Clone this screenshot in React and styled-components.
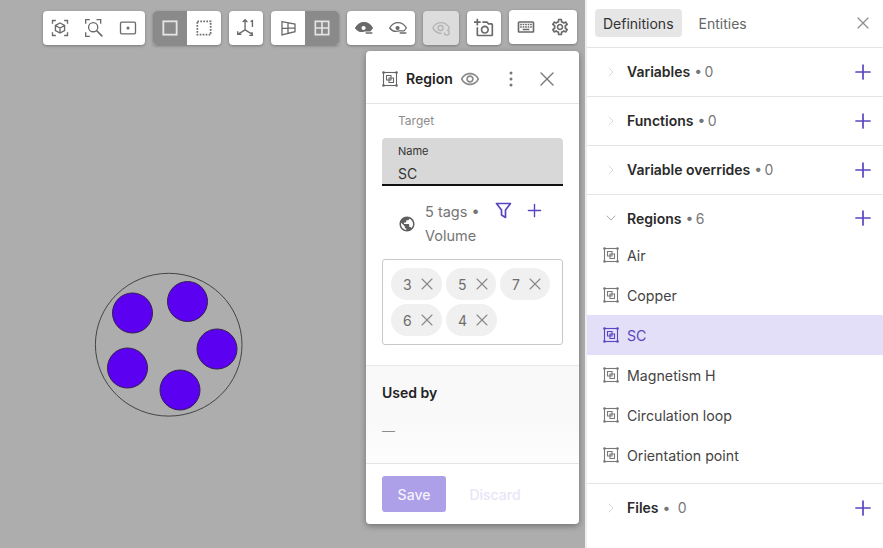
import styled, { createGlobalStyle } from "styled-components";
import { Plus, X, ChevronRight, ChevronDown } from "lucide-react";
import { MdPublic, MdOutlineAddAPhoto, MdOutlineKeyboard, MdOutlineSettings, MdOutlineRemoveRedEye } from "react-icons/md";

const GlobalStyle = createGlobalStyle`
  html, body {
    margin: 0;
    padding: 0;
    height: 100%;
    overflow: hidden;
    font-family: Inter, "Liberation Sans", sans-serif;
  }
  #root { height: 100%; }
  * { box-sizing: border-box; }
`;

const Page = styled.div`
  display: flex;
  width: 883px;
  height: 548px;
  background: #fff;
`;

const Canvas = styled.main`
  position: relative;
  width: 585px;
  height: 548px;
  flex: none;
  background: #adadad;
  padding: 11px 6px 0 0;
  display: flex;
  flex-direction: column;
  align-items: flex-end;
`;

const Scene = styled.svg`
  position: absolute;
  left: 80px;
  top: 260px;
`;

const Toolbar = styled.div`
  display: flex;
  gap: 8px;
  align-items: flex-start;
  margin-right: 2px;
`;

const Group = styled.div`
  display: flex;
  height: 34px;
  border-radius: 4px;
  overflow: hidden;
  background: ${({ $disabled }) => ($disabled ? "#dcdcdc" : "#fff")};
  box-shadow: 0 1px 3px rgba(0, 0, 0, 0.3);
  margin-top: ${({ $raised }) => ($raised ? "-1px" : "0")};
`;

const ToolButton = styled.button`
  width: ${({ $wide }) => ($wide ? "36px" : "34px")};
  height: 34px;
  padding: 0;
  border: none;
  display: flex;
  align-items: center;
  justify-content: center;
  color: ${({ $active, $muted }) => ($active ? "#e4e4e4" : $muted ? "#b4b4b4" : "#6a6a6a")};
  background: ${({ $active }) => ($active ? "#8a8a8a" : "transparent")};
`;

const Panel = styled.section`
  width: 213px;
  height: 473px;
  margin-top: 6px;
  background: #fff;
  border-radius: 4px;
  box-shadow: 0 2px 6px rgba(0, 0, 0, 0.35);
  display: flex;
  flex-direction: column;
  overflow: hidden;
`;

const PanelHeader = styled.header`
  height: 53px;
  flex: none;
  display: flex;
  align-items: center;
  padding: 3px 0 0 16px;
  border-bottom: 1px solid #e4e4e4;
  color: #666;
`;

const PanelTitle = styled.h2`
  margin: 0 0 0 8px;
  font-size: 14px;
  font-weight: 600;
  color: #222;
`;

const HeaderEye = styled.span`
  display: flex;
  margin-left: 7px;
  color: #8a8a8a;
`;

const HeaderDots = styled.span`
  display: flex;
  margin-left: 21px;
  color: #777;
`;

const HeaderClose = styled.span`
  display: flex;
  margin-left: 14px;
  color: #777;
`;

const PanelBody = styled.div`
  flex: none;
  height: 261px;
  padding: 0 16px;
`;

const TargetLabel = styled.div`
  height: 34px;
  padding: 9px 0 0 16px;
  font-size: 12px;
  line-height: 15px;
  color: #8c8c8c;
`;

const NameField = styled.div`
  height: 48px;
  background: #d8d8d8;
  border-radius: 4px 4px 0 0;
  border-bottom: 2px solid #111;
  padding: 6px 16px 0;
`;

const NameLabel = styled.div`
  font-size: 11px;
  line-height: 14px;
  color: #333;
`;

const NameValue = styled.div`
  margin-top: 7px;
  font-size: 14px;
  line-height: 18px;
  color: #333;
`;

const TagsInfo = styled.div`
  height: 73px;
  display: flex;
  padding-left: 16px;
  color: #5f5f5f;
`;

const GlobeWrap = styled.span`
  display: flex;
  margin: 29px 9px 0 0;
`;

const TagsText = styled.div`
  width: 66px;
  padding-top: 14px;
  font-size: 14.5px;
  line-height: 24px;
  color: #757575;
`;

const TagsActions = styled.div`
  display: flex;
  align-items: center;
  align-self: flex-start;
  gap: 12px;
  margin: 14px 0 0 4px;
  color: #5a45c0;
`;

const TagBox = styled.div`
  height: 86px;
  border: 1px solid #c8c8c8;
  border-radius: 3px;
  padding: 8px;
  display: flex;
  flex-wrap: wrap;
  align-content: flex-start;
  gap: 4px;
`;

const Chip = styled.span`
  width: ${({ $narrow }) => ($narrow ? "50px" : "51px")};
  height: 32px;
  border-radius: 16px;
  background: #f0f0f0;
  display: flex;
  align-items: center;
  gap: 5px;
  padding-left: 12px;
  font-size: 14px;
  color: #6e6e6e;
  svg { color: #888; flex: none; }
`;

const UsedBy = styled.div`
  flex: none;
  height: 98px;
  border-top: 1px solid #e8e8e8;
  background: linear-gradient(#f9f9f9 60%, #fdfdfd);
  padding: 18px 16px 0;
`;

const UsedTitle = styled.h3`
  margin: 0;
  font-size: 14px;
  line-height: 18px;
  font-weight: 600;
  color: #222;
`;

const UsedEmpty = styled.div`
  margin-top: 20px;
  font-size: 13px;
  line-height: 18px;
  color: #8c8c8c;
`;

const PanelFooter = styled.footer`
  flex: 1;
  border-top: 1px solid #e4e4e4;
  display: flex;
  align-items: flex-start;
  padding: 12px 16px 0;
`;

const SaveButton = styled.button`
  width: 64px;
  height: 36px;
  border: none;
  border-radius: 3px;
  background: #ad9fe8;
  color: #f4f2fd;
  font: 500 14px Inter, sans-serif;
`;

const DiscardButton = styled.button`
  margin-left: 16px;
  width: 66px;
  height: 36px;
  border: none;
  background: none;
  color: #e8e5f8;
  font: 500 14px Inter, sans-serif;
`;

const Sidebar = styled.aside`
  width: 298px;
  flex: none;
  border-left: 2px solid #eeeeee;
  background: #fff;
`;

const TabBar = styled.nav`
  height: 48px;
  display: flex;
  align-items: flex-start;
  padding: 9px 10px 0 8px;
  border-bottom: 1px solid #e4e4e4;
`;

const Tab = styled.button`
  height: 28px;
  border: none;
  border-radius: 4px;
  padding: 0 8px;
  margin-right: 9px;
  background: ${({ $active }) => ($active ? "#e6e6e6" : "transparent")};
  color: ${({ $active }) => ($active ? "#333" : "#666")};
  font: 400 14px Inter, sans-serif;
`;

const TabClose = styled.span`
  display: flex;
  margin: 4px 0 0 auto;
  color: #8f8f8f;
`;

const Section = styled.div`
  border-bottom: ${({ $last }) => ($last ? "none" : "1px solid #e4e4e4")};
`;

const SectionHead = styled.div`
  height: ${({ $open }) => ($open ? "40px" : "48px")};
  display: flex;
  align-items: center;
  padding: ${({ $open }) => ($open ? "6px 8px 0 16px" : "0 8px 1px 16px")};
  font-size: 14px;
  svg.chev { color: ${({ $open }) => ($open ? "#aaa" : "#d8d8d8")}; }
`;

const SectionName = styled.span`
  margin-left: 8px;
  font-weight: 600;
  color: #2a2a2a;
`;

const SectionCount = styled.span`
  margin-left: 4px;
  color: #777;
  white-space: pre;
  word-spacing: -1.5px;
`;

const AddIcon = styled.span`
  display: flex;
  margin-left: auto;
  color: #5a45c0;
`;

const List = styled.ul`
  list-style: none;
  margin: 0;
  padding: 0 0 8px;
`;

const Item = styled.li`
  height: 40px;
  display: flex;
  align-items: center;
  gap: 8px;
  padding-left: 16px;
  font-size: 14.2px;
  color: ${({ $selected }) => ($selected ? "#5a45c0" : "#444")};
  background: ${({ $selected }) => ($selected ? "#e3dff8" : "transparent")};
  svg { color: ${({ $selected }) => ($selected ? "#5a45c0" : "#777")}; }
`;

const Svg = ({ size = 20, children }) => (
  <svg width={size} height={size} viewBox="0 0 24 24" fill="none" stroke="currentColor" strokeWidth="1.6">
    {children}
  </svg>
);

const RegionIcon = ({ size = 16 }) => (
  <svg width={size} height={size} viewBox="0 0 16 16" fill="none" stroke="currentColor" strokeWidth="1.1">
    <rect x="1.5" y="1.5" width="13" height="13" />
    <path d="M4.5 4.5h4.5v4.5h-4.5z M7 7h4.5v4.5h-4.5z" />
    <g fill="currentColor" stroke="none">
      <circle cx="1.5" cy="1.5" r="1.3" />
      <circle cx="14.5" cy="1.5" r="1.3" />
      <circle cx="1.5" cy="14.5" r="1.3" />
      <circle cx="14.5" cy="14.5" r="1.3" />
    </g>
  </svg>
);

const Corners = () => <path d="M3 7V3h4M17 3h4v4M21 17v4h-4M7 21H3v-4" />;

const CubeFocus = () => (
  <Svg>
    <Corners />
    <path d="M12 6l5.5 3v6L12 18l-5.5-3V9zM6.5 9l5.5 3 5.5-3M12 12v6" />
  </Svg>
);

const ZoomFocus = () => (
  <Svg>
    <path d="M2 7V2h5M15 2h5v5M2 17v5h5" />
    <circle cx="11" cy="11" r="5.5" />
    <path d="M15 15l7 7" strokeWidth="2" />
  </Svg>
);

const FrameDot = () => (
  <Svg>
    <rect x="3" y="5" width="18" height="14" rx="1.5" />
    <circle cx="12" cy="12" r="1" fill="currentColor" />
  </Svg>
);

const SolidSquare = () => (
  <Svg>
    <rect x="4" y="4" width="16" height="16" strokeWidth="2.2" />
  </Svg>
);

const DottedSquare = () => (
  <Svg>
    <rect x="4" y="4" width="16" height="16" strokeWidth="2" strokeDasharray="2 1.6" />
  </Svg>
);

const Axes = () => (
  <svg width="22" height="22" viewBox="0 0 24 24" fill="none" stroke="currentColor" strokeWidth="1.5">
    <path d="M11 3v11M11 14l-8 5M11 14l8 5M8.5 5.5L11 3l2.5 2.5M3 15.5V19h4M15.5 20H19l-.5-3.5" />
    <path d="M17 5l2-1v7" />
  </svg>
);

const Perspective = () => (
  <Svg>
    <path d="M4.8 4.3L20.4 7.2V16.4L4.8 20.4ZM12 5.6V18.6M4.8 12.5L20.4 11.8" />
  </Svg>
);

const GridView = () => (
  <Svg>
    <path d="M4 4h16v16H4zM12 4v16M4 12h16" strokeWidth="2" />
  </Svg>
);

const EyeMinus = ({ solid }) => (
  <Svg>
    <path
      d="M2 12c2.500-4.500 6-6.500 10-6.500s7.500 2 10 6.500c-1 1.500-2 2.700-3 3.500H13c-5 1.500-8 .5-11-3.500z"
      fill={solid ? "currentColor" : "none"}
    />
    <circle cx="11.500" cy="12" r="2.500" fill={solid ? "#fff" : "currentColor"} stroke="none" />
    <path d="M14 18h8" strokeWidth="2" />
  </Svg>
);

const EyeRefresh = () => (
  <Svg>
    <path d="M2 12c2.500-4.500 6-6.500 10-6.500s7.500 2 10 6.500c-.5.800-1 1.500-1.500 2M13 18.400c-5 .5-8-2-11-6.400" />
    <circle cx="11.500" cy="12" r="3" />
    <path d="M16 17.500a3 3 0 1 0 3-3" />
  </Svg>
);

const DotsVertical = () => (
  <svg width="20" height="20" viewBox="0 0 20 20" fill="currentColor">
    <circle cx="10" cy="4" r="1.500" />
    <circle cx="10" cy="10" r="1.500" />
    <circle cx="10" cy="16" r="1.500" />
  </svg>
);

const Funnel = () => (
  <svg width="17" height="17" viewBox="0 0 17 17" fill="none" stroke="currentColor" strokeWidth="1.7" strokeLinejoin="round">
    <path d="M1.500 1.500h14l-5 6.500v7.500l-4-2.500V8z" />
  </svg>
);

const sections = [
  { name: "Variables", count: "0" },
  { name: "Functions", count: "0" },
  { name: "Variable overrides", count: "0" },
];

const regions = ["Air", "Copper", "SC", "Magnetism H", "Circulation loop", "Orientation point"];

const tags = ["3", "5", "7", "6", "4"];

const discs = [
  [52.5, 53],
  [107.5, 41.5],
  [137, 89],
  [47.5, 108],
  [100, 130],
];

export default function App() {
  return (
    <Page>
      <GlobalStyle />
      <Canvas>
        <Scene width="180" height="170" viewBox="0 0 180 170">
          <ellipse cx="88.7" cy="84.7" rx="73.3" ry="71.4" fill="none" stroke="#444" strokeWidth="1" />
          {discs.map(([cx, cy]) => (
            <circle key={cx} cx={cx} cy={cy} r="20" fill="#5b00f0" stroke="#33224f" strokeWidth="1" />
          ))}
        </Scene>
        <Toolbar>
          <Group>
            <ToolButton><CubeFocus /></ToolButton>
            <ToolButton><ZoomFocus /></ToolButton>
            <ToolButton><FrameDot /></ToolButton>
          </Group>
          <Group>
            <ToolButton $active><SolidSquare /></ToolButton>
            <ToolButton><DottedSquare /></ToolButton>
          </Group>
          <Group>
            <ToolButton><Axes /></ToolButton>
          </Group>
          <Group>
            <ToolButton><Perspective /></ToolButton>
            <ToolButton $active><GridView /></ToolButton>
          </Group>
          <Group>
            <ToolButton><EyeMinus solid /></ToolButton>
            <ToolButton><EyeMinus /></ToolButton>
          </Group>
          <Group $disabled>
            <ToolButton $wide $muted><EyeRefresh /></ToolButton>
          </Group>
          <Group>
            <ToolButton><MdOutlineAddAPhoto size={20} /></ToolButton>
          </Group>
          <Group $raised>
            <ToolButton><MdOutlineKeyboard size={20} /></ToolButton>
            <ToolButton><MdOutlineSettings size={20} /></ToolButton>
          </Group>
        </Toolbar>
        <Panel>
          <PanelHeader>
            <RegionIcon />
            <PanelTitle>Region</PanelTitle>
            <HeaderEye><MdOutlineRemoveRedEye size={20} /></HeaderEye>
            <HeaderDots><DotsVertical /></HeaderDots>
            <HeaderClose><X size={24} strokeWidth={1.4} /></HeaderClose>
          </PanelHeader>
          <PanelBody>
            <TargetLabel>Target</TargetLabel>
            <NameField>
              <NameLabel>Name</NameLabel>
              <NameValue>SC</NameValue>
            </NameField>
            <TagsInfo>
              <GlobeWrap><MdPublic size={18} /></GlobeWrap>
              <TagsText>5 tags • Volume</TagsText>
              <TagsActions>
                <Funnel />
                <Plus size={21} strokeWidth={1.6} />
              </TagsActions>
            </TagsInfo>
            <TagBox>
              {tags.map((tag, i) => (
                <Chip key={tag} $narrow={i === 1 || i === 2}>
                  {tag}
                  <X size={20} strokeWidth={1.3} />
                </Chip>
              ))}
            </TagBox>
          </PanelBody>
          <UsedBy>
            <UsedTitle>Used by</UsedTitle>
            <UsedEmpty>—</UsedEmpty>
          </UsedBy>
          <PanelFooter>
            <SaveButton>Save</SaveButton>
            <DiscardButton>Discard</DiscardButton>
          </PanelFooter>
        </Panel>
      </Canvas>
      <Sidebar>
        <TabBar>
          <Tab $active>Definitions</Tab>
          <Tab>Entities</Tab>
          <TabClose><X size={20} strokeWidth={1.5} /></TabClose>
        </TabBar>
        {sections.map((s) => (
          <Section key={s.name}>
            <SectionHead>
              <ChevronRight className="chev" size={16} strokeWidth={1.5} />
              <SectionName>{s.name}</SectionName>
              <SectionCount>• {s.count}</SectionCount>
              <AddIcon><Plus size={24} strokeWidth={1.7} /></AddIcon>
            </SectionHead>
          </Section>
        ))}
        <Section>
          <SectionHead $open>
            <ChevronDown className="chev" size={16} strokeWidth={1.5} />
            <SectionName>Regions</SectionName>
            <SectionCount>• 6</SectionCount>
            <AddIcon><Plus size={24} strokeWidth={1.7} /></AddIcon>
          </SectionHead>
          <List>
            {regions.map((r) => (
              <Item key={r} $selected={r === "SC"}>
                <RegionIcon />
                {r}
              </Item>
            ))}
          </List>
        </Section>
        <Section $last>
          <SectionHead>
            <ChevronRight className="chev" size={16} strokeWidth={1.5} />
            <SectionName>Files</SectionName>
            <SectionCount>•   0</SectionCount>
            <AddIcon><Plus size={24} strokeWidth={1.7} /></AddIcon>
          </SectionHead>
        </Section>
      </Sidebar>
    </Page>
  );
}
